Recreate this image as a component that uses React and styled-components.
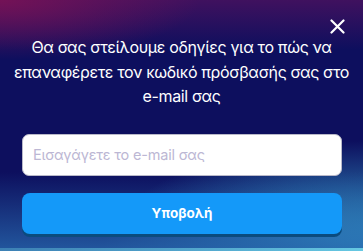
import React from "react";
import styled, { createGlobalStyle } from "styled-components";

const Global = createGlobalStyle`
  html, body { margin: 0; padding: 0; }
  body { font-family: Inter, "Noto Sans", sans-serif; }
  * { box-sizing: border-box; }
`;

const Screen = styled.div`
  position: relative;
  width: 363px;
  height: 251px;
  overflow: hidden;
  background:
    radial-gradient(ellipse 200px 60px at 0px 0px, rgba(125, 18, 85, 0.85), rgba(125, 18, 85, 0) 100%),
    linear-gradient(180deg, rgba(85, 18, 95, 0.7) 0px, rgba(85, 18, 95, 0) 50px),
    linear-gradient(180deg, rgba(30, 90, 165, 0) 172px, rgba(38, 100, 170, 0.85) 251px),
    radial-gradient(ellipse 260px 110px at 363px 251px, rgba(62, 185, 225, 0.95), rgba(62, 185, 225, 0) 100%),
    #0d0f5e;
  display: flex;
  flex-direction: column;
  align-items: center;
  padding: 35px 20px 0 20px;
`;

const Footer = styled.div`
  position: absolute;
  left: 0;
  right: 0;
  bottom: 0;
  height: 3px;
  background: linear-gradient(90deg, #3c80b4, #66c8e2);
`;

const Close = styled.button`
  position: absolute;
  top: 18px;
  right: 18px;
  width: 16px;
  height: 16px;
  padding: 0;
  border: none;
  background: none;
  display: flex;
  align-items: center;
  justify-content: center;
  cursor: pointer;
`;

const Message = styled.p`
  margin: 0;
  color: #ffffff;
  font-size: 16px;
  line-height: 24.5px;
  text-align: center;
  letter-spacing: -0.35px;
  white-space: nowrap;
`;

const Form = styled.form`
  width: 100%;
  margin-top: 25px;
  padding: 0 1px 0 2px;
  display: flex;
  flex-direction: column;
  gap: 17px;
`;

const Input = styled.input`
  width: 100%;
  height: 42px;
  border-radius: 7px;
  border: 1px solid #b9b9c9;
  background: #ffffff;
  padding: 0 10px;
  font-family: inherit;
  font-size: 14.5px;
  letter-spacing: -0.2px;
  color: #333;
  outline: none;
  &::placeholder { color: #bcb7d4; }
`;

const Submit = styled.button`
  width: 100%;
  height: 41px;
  border: none;
  border-radius: 8px;
  background: #1499f9;
  box-shadow: 0 3px 0 #0b4b7e;
  color: #ffffff;
  font-family: inherit;
  font-weight: 700;
  font-size: 13.5px;
  cursor: pointer;
`;

export default function App() {
  return (
    <>
      <Global />
      <Screen>
        <Close aria-label="close">
          <svg width="15" height="15" viewBox="0 0 15 15">
            <path d="M1.5 1.5 L13.5 13.5 M13.5 1.5 L1.5 13.5" stroke="#fff" strokeWidth="2.2" strokeLinecap="round" />
          </svg>
        </Close>
        <Message>
          Θα σας στείλουμε οδηγίες για το πώς να
          <br />
          επαναφέρετε τον κωδικό πρόσβασής σας στο
          <br />
          e-mail σας
        </Message>
        <Form onSubmit={(e) => e.preventDefault()}>
          <Input placeholder="Εισαγάγετε το e-mail σας" />
          <Submit type="submit">Υποβολή</Submit>
        </Form>
        <Footer />
      </Screen>
    </>
  );
}
